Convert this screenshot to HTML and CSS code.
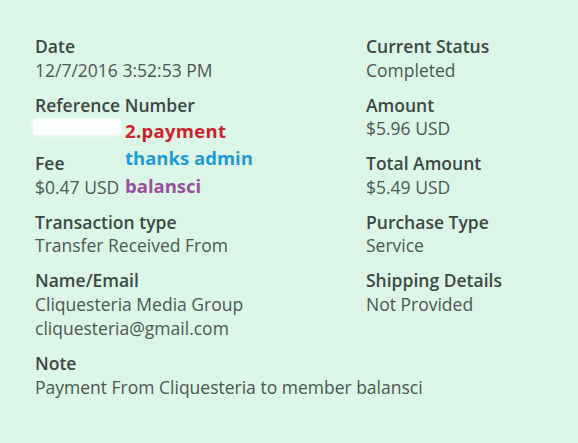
FILE: index.html
```html
<!DOCTYPE html>
<html>
<head>
<meta charset="utf-8">
<link rel="stylesheet" href="styles.css">
</head>
<body>
<div class="page">
  <div class="details">
    <div class="field">
      <div class="label">Date</div>
      <div class="value">12/7/2016 3:52:53 PM</div>
    </div>
    <div class="field">
      <div class="label">Current Status</div>
      <div class="value">Completed</div>
    </div>
    <div class="field ref">
      <div class="label">Reference Number</div>
      <div class="value"><span class="smudge"></span></div>
      <div class="notes">
        <div class="note-red">2.payment</div>
        <div class="note-blue">thanks admin</div>
        <div class="note-purple">balansci</div>
      </div>
    </div>
    <div class="field">
      <div class="label">Amount</div>
      <div class="value">$5.96 USD</div>
    </div>
    <div class="field">
      <div class="label">Fee</div>
      <div class="value">$0.47 USD</div>
    </div>
    <div class="field">
      <div class="label">Total Amount</div>
      <div class="value">$5.49 USD</div>
    </div>
    <div class="field">
      <div class="label">Transaction type</div>
      <div class="value">Transfer Received From</div>
    </div>
    <div class="field">
      <div class="label">Purchase Type</div>
      <div class="value">Service</div>
    </div>
    <div class="field">
      <div class="label">Name/Email</div>
      <div class="value">Cliquesteria Media Group</div>
      <div class="value extra">cliquesteria@gmail.com</div>
    </div>
    <div class="field">
      <div class="label">Shipping Details</div>
      <div class="value">Not Provided</div>
    </div>
    <div class="field wide">
      <div class="label">Note</div>
      <div class="value">Payment From Cliquesteria to member balansci</div>
    </div>
  </div>
</div>
</body>
</html>
```

FILE: styles.css
```css
html, body {
  margin: 0;
  padding: 0;
  background: #dbf6e6;
}

.page {
  width: 578px;
  height: 443px;
  box-sizing: border-box;
  padding: 35px 0 0 35px;
  font-family: "Open Sans", "Noto Sans", sans-serif;
  font-size: 17.5px;
  line-height: 23.5px;
}

.details {
  display: grid;
  grid-template-columns: 331px 1fr;
  row-gap: 11.5px;
}

.field {
  position: relative;
}

.wide {
  grid-column: 1 / span 2;
}

.label {
  font-weight: 600;
  color: #3d4845;
}

.value {
  color: #4c5652;
  height: 23.5px;
  white-space: nowrap;
}

.value.extra {
  margin-top: 1px;
}

.smudge {
  display: inline-block;
  width: 88px;
  height: 16px;
  margin: 2px 0 0 -2px;
  background: #fdfffe;
  border-radius: 4px;
  box-shadow: 0 0 3px 1px #f4fbf7;
}

.notes {
  position: absolute;
  left: 90px;
  top: 23px;
  font-weight: 700;
  font-size: 18.5px;
  line-height: 27.5px;
}

.note-red { color: #d0222c; letter-spacing: 0.3px; }
.note-blue { color: #1f9bd5; }
.note-purple { color: #9a4c9f; }
```
